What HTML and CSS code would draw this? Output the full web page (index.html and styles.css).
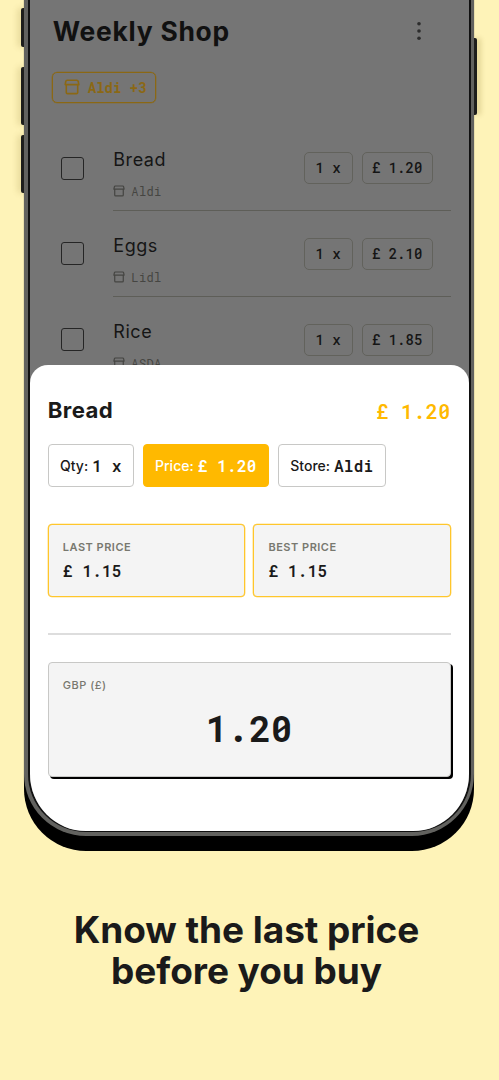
FILE: index.html
```html
<!DOCTYPE html>
<html lang="en">
<head>
<meta charset="utf-8">
<title>Weekly Shop</title>
<link rel="stylesheet" href="styles.css">
</head>
<body>
<svg width="0" height="0" class="defs">
  <symbol id="store" viewBox="0 0 16 16">
    <path d="M3.2 1.3H12.8Q14 1.3 14.2 2.4L14.8 5.6H1.2L1.8 2.4Q2 1.3 3.2 1.3ZM2.3 5.6V13.4Q2.3 14.6 3.5 14.6H12.5Q13.7 14.6 13.7 13.4V5.6" fill="none" stroke="currentColor" stroke-width="1.6" stroke-linejoin="round" stroke-linecap="round"/>
  </symbol>
</svg>
<main class="poster">
  <div class="phone">
    <i class="key key-a"></i><i class="key key-b"></i><i class="key key-c"></i><i class="key key-d"></i>
    <div class="screen">
      <header class="top">
        <h1>Weekly Shop</h1>
        <svg class="dots" viewBox="0 0 6 20"><circle cx="3" cy="2.7" r="1.8"/><circle cx="3" cy="10" r="1.8"/><circle cx="3" cy="17.3" r="1.8"/></svg>
      </header>
      <div class="filter"><svg><use href="#store"/></svg><span class="mono">Aldi +3</span></div>
      <ul class="list">
        <li><i class="check"></i><div class="item"><div class="info"><b>Bread</b><small><svg><use href="#store"/></svg><span class="mono">Aldi</span></small></div><span class="pill qty mono">1 x</span><span class="pill cost mono">£ 1.20</span></div></li>
        <li><i class="check"></i><div class="item"><div class="info"><b>Eggs</b><small><svg><use href="#store"/></svg><span class="mono">Lidl</span></small></div><span class="pill qty mono">1 x</span><span class="pill cost mono">£ 2.10</span></div></li>
        <li><i class="check"></i><div class="item"><div class="info"><b>Rice</b><small><svg><use href="#store"/></svg><span class="mono">ASDA</span></small></div><span class="pill qty mono">1 x</span><span class="pill cost mono">£ 1.85</span></div></li>
      </ul>
      <section class="sheet">
        <div class="title"><h2>Bread</h2><span class="total mono">£ 1.20</span></div>
        <div class="tabs">
          <div class="tab tab-qty"><span>Qty:</span><span class="mono">1 x</span></div>
          <div class="tab tab-price"><span>Price:</span><span class="mono">£ 1.20</span></div>
          <div class="tab tab-store"><span>Store:</span><span class="mono">Aldi</span></div>
        </div>
        <div class="stats">
          <div class="stat"><label>LAST PRICE</label><span class="mono">£ 1.15</span></div>
          <div class="stat"><label>BEST PRICE</label><span class="mono">£ 1.15</span></div>
        </div>
        <div class="rule"></div>
        <div class="entry"><label>GBP (£)</label><div class="amount mono">1.20</div></div>
      </section>
    </div>
  </div>
  <p class="caption">Know the last price<br>before you buy</p>
</main>
</body>
</html>
```
FILE: styles.css
```css
* { box-sizing: border-box; }
body { margin: 0; background: #fef3b8; font-family: Inter, sans-serif; color: #1a1a1a; }
.defs { display: block; position: absolute; }
.poster { height: 1080px; overflow: hidden; }
h1, h2, p, ul { margin: 0; padding: 0; }
.phone {
  position: relative; width: 450px; height: 836px; margin-left: 24.4px; padding: 0 3.8px 4.5px 3.4px;
  background: #62625f; border-radius: 0 0 62px 62px;
  box-shadow: 0 15px 0 #000, 0 0 1px #333;
}
.key { position: absolute; z-index: -1; background: #1d1d1b; border-radius: 2px; width: 6px; left: -3.5px; box-shadow: -3px 0 6px rgba(120,100,20,.2); }
.key-a { top: 8px; height: 39px; }
.key-b { top: 67px; height: 58px; }
.key-c { top: 135px; height: 58px; }
.key-d { top: 38px; height: 77px; left: auto; right: -3px; box-shadow: 4px 0 5px rgba(120,100,20,.2); }
.screen { height: 831.5px; background: #757575; border: solid #111; border-width: 0 2px 1px; border-radius: 0 0 58px 58px; overflow: hidden; display: flex; flex-direction: column; position: relative; }
.mono { font-family: "Roboto Mono", "DejaVu Sans Mono", monospace; white-space: pre; }

.top { display: flex; justify-content: space-between; padding: 15px 46.5px 0 23px; height: 71.5px; }
h1 { font-size: 26.4px; line-height: 32px; font-weight: 700; letter-spacing: .75px; color: #111; }
.dots { width: 6px; height: 20px; margin-top: 6px; fill: #2c2c2c; }
.filter { flex: none; width: 104px; height: 31px; margin-left: 22px; border: 1.5px solid #8b6814; border-radius: 5px; display: flex; align-items: center; gap: 8px; padding-left: 11px; color: #8b6814; font-size: 14px; font-weight: 700; box-shadow: 0 0 0 .3px #8b6814; }
.filter svg { width: 16px; height: 16px; }
.list { list-style: none; padding: 22.9px 18px 0 31px; }
.list li { display: flex; height: 85.6px; }
.check { flex: none; width: 23px; height: 23px; margin: 31.5px 29.5px 0 0; border: 1.5px solid #252525; border-radius: 3px; }
.item { flex: 1; display: flex; align-items: flex-start; border-bottom: 1px solid #5e5e58; padding-right: 18px; }
.info { flex: 1; padding-top: 24px; }
.info b { display: block; font-weight: 400; font-size: 18px; line-height: 22px; letter-spacing: .55px; color: #151515; }
.info small { display: flex; align-items: center; gap: 6px; font-size: 12px; line-height: 16px; margin-top: 12px; color: #454542; letter-spacing: .4px; }
.info small svg { width: 12px; height: 12px; }
.pill { display: flex; align-items: center; justify-content: center; height: 32px; margin-top: 27px; padding-bottom: 1px; border: 1px solid #62625c; border-radius: 5px; font-size: 14px; font-weight: 500; color: #151515; }
.qty { width: 49px; margin-right: 9px; }
.cost { width: 71px; }

.sheet { position: absolute; left: 0; right: 0; top: 365px; bottom: 0; background: #fff; border-radius: 18px 18px 0 0; padding: 30px 18px 0; }
.title { display: flex; justify-content: space-between; height: 49px; }
h2 { font-size: 22.2px; line-height: 30px; font-weight: 700; letter-spacing: .4px; }
.total { font-size: 20px; line-height: 32px; font-weight: 600; color: #ffb900; letter-spacing: .4px; }
.tabs { display: flex; gap: 9px; }
.tab { height: 43px; border: 1px solid #c8c8c6; border-radius: 4px; display: flex; align-items: center; justify-content: center; gap: 4px; font-size: 14px; font-weight: 500; }
.tab .mono { font-size: 16px; font-weight: 600; letter-spacing: .2px; }
.tab-qty { width: 86px; }
.tab-price { width: 126px; background: #ffb900; border-color: #ffb900; color: #fff; }
.tab-store { width: 108px; }
.stats { display: grid; grid-template-columns: 1fr 1fr; gap: 8.5px; margin-top: 37px; }
.stat { height: 73px; border: 1.5px solid #ffc62b; border-radius: 4px; background: #f4f4f4; padding: 15px 14px 0; box-shadow: 0 0 0 .3px #ffc62b; }
label { display: block; font-size: 11px; line-height: 15px; font-weight: 600; letter-spacing: .5px; color: #78786f; }
.stat .mono { display: block; font-size: 16px; line-height: 20px; font-weight: 600; margin-top: 6px; letter-spacing: .2px; }
.rule { height: 1.5px; background: #ddd; margin-top: 36px; }
.entry { height: 114.5px; margin-top: 27.5px; background: #f4f4f4; border: 1px solid #c8c8c6; border-radius: 4px; box-shadow: 2px 2px 0 #000; padding: 15px 14px; }
.entry label { font-weight: 500; }
.amount { font-size: 36px; line-height: 44px; font-weight: 700; text-align: center; margin-top: 13px; }
.caption { margin-top: 72.5px; font-size: 37px; line-height: 41px; font-weight: 700; text-align: center; letter-spacing: -.05px; padding-right: 6px; }
```
